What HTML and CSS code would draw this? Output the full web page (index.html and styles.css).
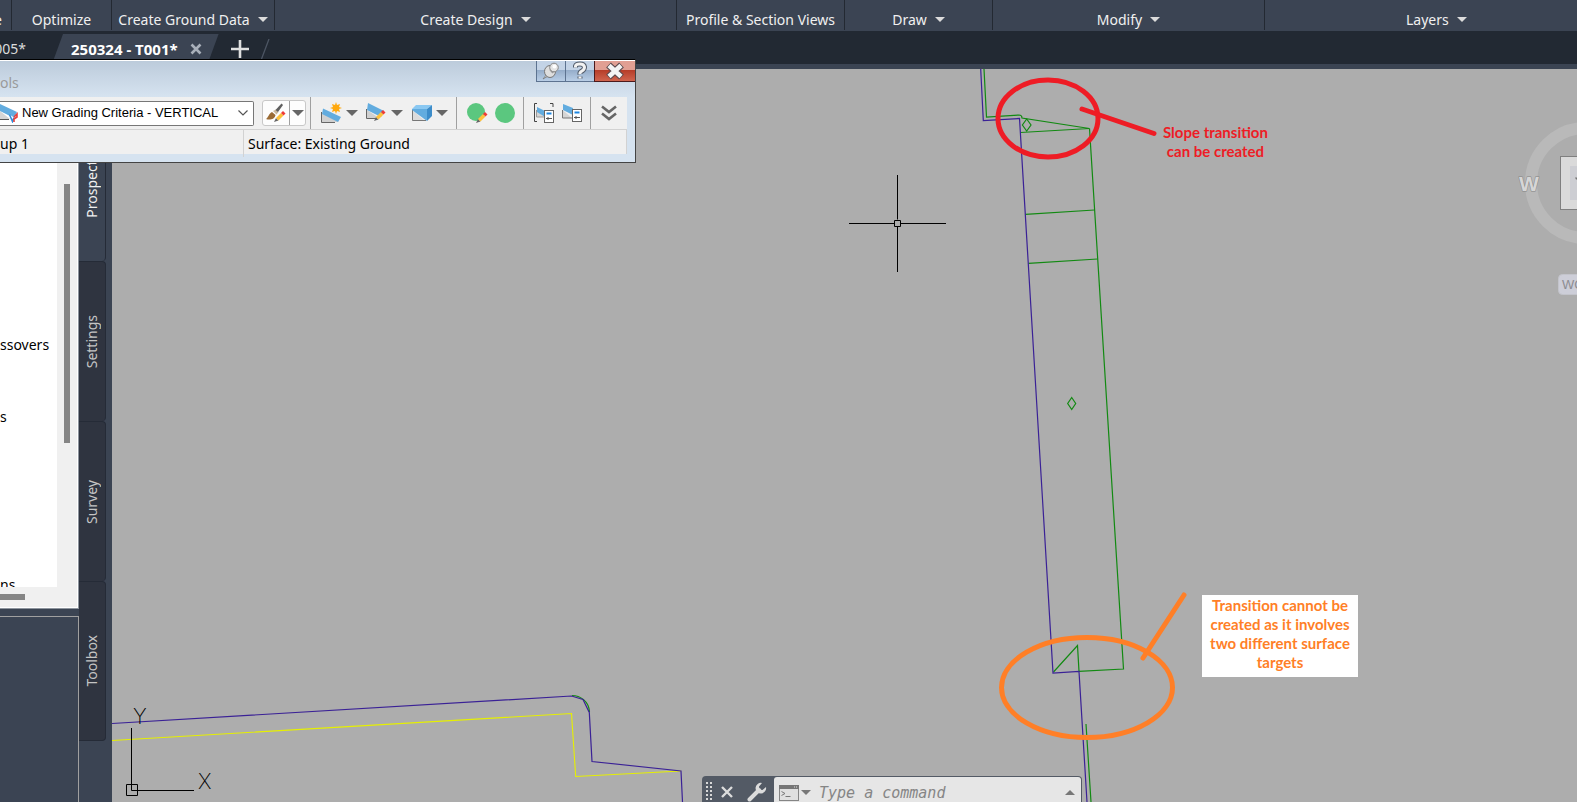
FILE: index.html
```html
<!DOCTYPE html>
<html lang="en">
<head>
<meta charset="utf-8">
<title>250324 - T001</title>
<link rel="stylesheet" href="styles.css">
</head>
<body>
<svg class="defs" aria-hidden="true">
  <defs>
    <symbol id="down" viewBox="0 0 12 6"><path d="M0 0h12L6 6z" fill="currentColor"/></symbol>
    <symbol id="pencil" viewBox="0 0 12 12"><path d="M0 12l2-4 2.500 2.500z" fill="#666"/><path d="M2 8l5-5 2.500 2.500-5 5z" fill="#fdc13c"/><path d="M7 3l2-2 2.500 2.500-2 2z" fill="#ee3b36"/></symbol>
  </defs>
</svg>

<nav class="ribbon" aria-label="Ribbon panels">
  <span class="panel panel-start">e</span>
  <button class="panel">Optimize</button>
  <button class="panel">Create Ground Data <svg class="caret"><use href="#down"/></svg></button>
  <button class="panel">Create Design <svg class="caret"><use href="#down"/></svg></button>
  <button class="panel">Profile &amp; Section Views</button>
  <button class="panel">Draw <svg class="caret"><use href="#down"/></svg></button>
  <button class="panel">Modify <svg class="caret"><use href="#down"/></svg></button>
  <button class="panel panel-end">Layers <svg class="caret"><use href="#down"/></svg></button>
</nav>

<div class="files">
  <button class="file">005*</button>
  <div class="file-active">
    <button class="file-name">250324 - T001*</button>
    <button class="file-close" aria-label="Close drawing"><svg width="12" height="12" viewBox="0 0 12 12"><path d="M1.500 1.500l9 9M10.500 1.500l-9 9" stroke="#a9b0ba" stroke-width="2.600"/></svg></button>
  </div>
  <button class="file-new" aria-label="New drawing"><svg width="18" height="18" viewBox="0 0 18 18"><path d="M9 0v18M0 9h18" stroke="#e0e0e0" stroke-width="2.600"/></svg></button>
  <svg class="file-slash" width="9" height="20" viewBox="0 0 9 20"><path d="M.5 20L8 0" stroke="#4d5664" stroke-width="1.300"/></svg>
</div>

<main class="workspace">
  <aside class="toolspace">
    <div class="panes">
      <div class="tree-pane">
        <ul class="tree">
          <li class="row-a">ssovers</li>
          <li class="row-b">s</li>
          <li class="row-c">ns</li>
        </ul>
        <div class="vscroll"><div class="vthumb"></div></div>
        <div class="hscroll"><div class="hthumb"></div></div>
      </div>
      <div class="detail-pane"></div>
    </div>
    <div class="side-tabs">
      <button class="side-tab current"><span>Prospector</span></button>
      <button class="side-tab"><span>Settings</span></button>
      <button class="side-tab"><span>Survey</span></button>
      <button class="side-tab"><span>Toolbox</span></button>
    </div>
  </aside>

  <section class="canvas">
    <svg class="drawing" aria-label="Grading plan">
      <g transform="translate(-112 -69)" fill="none">
        <g stroke="#e6f000" stroke-width="1.100">
          <path d="M112 740.500L571.500 713.500L575.700 776.500L681 771"/>
        </g>
        <g stroke="#128a12" stroke-width="1.200">
          <path d="M572 695.500C580 695.500 589 701 589.500 712"/>
          <path d="M984 69L986.500 117L1019 115Q1022 115 1022 118L1089.500 128.500L1020.500 132.500"/>
          <path d="M1089.500 128.500L1123.500 669L1079 671.300L1077.500 645.500L1053.500 672"/>
          <path d="M1025.500 214.300L1094.500 210M1028.500 263.300L1097.500 259M1086 724L1091 802"/>
          <path d="M1026.700 119l4.300 6-4.300 6-4.300-6zM1071.700 397.500l4 6-4 6-4-6z"/>
        </g>
        <g stroke="#3a2196" stroke-width="1.200">
          <path d="M112 723.500L571.500 696L583 699.500L589.300 712.500L592 761.500L681 771L682.500 802"/>
          <path d="M980.700 69L983.300 120.500L1019.500 118.500L1053 673L1079 671.500L1087 802"/>
        </g>
        <g stroke="#000">
          <path d="M897.500 175v44.500M897.500 227v45M849 223.500h45M901 223.500h45M894.500 220.500h6v6h-6z"/>
          <path d="M131.500 728v62.500H194M126.500 784.500h11v11h-11z"/>
        </g>
        <g class="ucs"><text x="133" y="724">Y</text><text x="198" y="789">X</text></g>
        <g stroke="#ee1c25" stroke-width="5" stroke-linecap="round">
          <ellipse cx="1048" cy="118.500" rx="50" ry="38.500"/><path d="M1082 109L1154 133.500"/>
        </g>
        <g stroke="#ff7f27" stroke-width="5" stroke-linecap="round">
          <ellipse cx="1087" cy="687.500" rx="85.500" ry="50"/><path d="M1184 595L1143 658"/>
        </g>
      </g>
    </svg>

    <p class="note note-red">Slope transition<br>can be created</p>
    <p class="note note-orange">Transition cannot be<br>created as it involves<br>two different surface<br>targets</p>

    <svg class="viewcube" width="64" height="190" viewBox="0 0 64 190" aria-label="View cube">
      <circle cx="73" cy="73" r="55" fill="none" stroke="#b9b9b9" stroke-width="12"/>
      <rect x="47.500" y="46.500" width="54" height="53" fill="#dadada" stroke="#7f7f7f"/>
      <rect x="57" y="56" width="34" height="34" fill="#cdced3"/>
      <path d="M62 67.500h2v2h-1z" fill="#777"/>
      <text class="compass" x="6" y="81">W</text>
      <rect x="45.500" y="164.500" width="40" height="20" rx="4" fill="#cdced8" stroke="#c3c4cb"/>
      <text class="wcs" x="49" y="179">WC</text>
    </svg>

    <div class="command">
      <div class="grip"></div>
      <button class="cmd-btn" aria-label="Close"><svg width="12" height="12" viewBox="0 0 12 12"><path d="M1 1l10 10M11 1L1 11" stroke="#dcdcdc" stroke-width="2.400"/></svg></button>
      <button class="cmd-btn cmd-wrench" aria-label="Customize"><svg width="20" height="20" viewBox="0 0 20 20"><path d="M2.500 17.500L12 8" stroke="#dcdcdc" stroke-width="4" stroke-linecap="round"/><path d="M15 1a5.300 5.300 0 1 0 4 4l-3.500 3-3-.5-.5-3z" fill="#dcdcdc"/></svg></button>
      <div class="cmd-line">
        <svg width="20" height="16" viewBox="0 0 20 16"><rect x=".5" y=".5" width="19" height="15" fill="#e0e0e0" stroke="#858585"/><path d="M0 0h20v4H0z" fill="#777"/><path d="M15 2h1M17 2h1" stroke="#ddd"/><path d="M2.500 6.500l3.500 2-3.500 2M6.500 11.500h5" fill="none" stroke="#777"/></svg>
        <svg class="cmd-caret"><use href="#down"/></svg>
        <input class="cmd-input" aria-label="Command" placeholder="Type a command">
        <svg class="cmd-up"><use href="#down"/></svg>
      </div>
    </div>
  </section>
</main>

<section class="palette" aria-label="Grading tools">
  <header class="caption">
    <h1 class="caption-text">ols</h1>
    <div class="caption-buttons">
      <button class="cap" aria-label="Pin"><svg width="18" height="18" viewBox="0 0 18 18"><path d="M1 17l4-5 2 1.500z" fill="#ddd" stroke="#777" stroke-width=".8"/><ellipse cx="8" cy="9.500" rx="5.500" ry="6" fill="#dedede" stroke="#777"/><path d="M8.500 7l3 3.500" stroke="#999" stroke-width="3"/><circle cx="12" cy="5.500" r="4.300" fill="#e4e4e4" stroke="#888"/><circle cx="12.500" cy="4.500" r="2" fill="#fff"/></svg></button>
      <button class="cap" aria-label="Help"><svg width="14" height="20" viewBox="0 0 14 20"><g fill="none" stroke-linejoin="round"><path d="M2.500 6.500V5Q3 3 7 3t4.500 3Q11.500 8.500 9 10T7 13.200M7 15.400v2.200" stroke="#505a68" stroke-width="5"/><path d="M2.500 6.500V5Q3 3 7 3t4.500 3Q11.500 8.500 9 10T7 13.200M7 15.400v2.200" stroke="#f2f2f2" stroke-width="3"/></g></svg></button>
      <button class="cap cap-close" aria-label="Close"><svg width="20" height="18" viewBox="0 0 20 18"><path d="M3.500 3l13 12M16.500 3l-13 12" stroke="#5b4a4e" stroke-width="7"/><path d="M4 3.500l12 11M16 3.500l-12 11" stroke="#f4f4f4" stroke-width="4.600"/></svg></button>
    </div>
  </header>

  <div class="tools">
    <div class="combo">
      <svg width="18" height="20" viewBox="0 0 18 20"><path d="M0 8v8h10z" fill="#d5d5d5"/><path d="M0 16.500h9" stroke="#555"/><path d="M0 1l17 8-3 6L0 8z" fill="#62acdf"/><path d="M9.500 11.500l3 7 1.500-4" fill="#fff" stroke="#2f8ddd" stroke-width="1.600"/><path d="M14 14l3-3v3l-3 2v3" fill="none" stroke="#e8413c" stroke-width="1.600"/></svg>
      <select class="criteria" aria-label="Grading criteria"><option>New Grading Criteria - VERTICAL</option></select>
      <svg class="combo-chevron" width="10" height="6" viewBox="0 0 10 6"><path d="M.5 .5l4.500 4.500L9.500 .5" fill="none" stroke="#555" stroke-width="1.200"/></svg>
    </div>
    <div class="split">
      <button class="split-main" aria-label="Edit criteria"><svg width="20" height="20" viewBox="0 0 20 20"><path d="M0 16c2-1 2.500-5 6-7l3.500 3C9 16 4 17.500 0 16z" fill="#9b6b34"/><path d="M7 8l3.500 3.500 2-2.500L10 6.500z" fill="#c9b79c"/><path d="M9.500 7l6-6.500 1.500 1.500-5 7z" fill="#5f5f5f"/><svg x="8" y="7" width="12" height="12"><use href="#pencil"/></svg></svg></button>
      <button class="split-more" aria-label="More"><svg class="arrow"><use href="#down"/></svg></button>
    </div>
    <div class="group">
      <button class="tool" aria-label="Create grading"><svg width="22" height="22" viewBox="0 0 22 22"><path d="M1 11v9h17z" fill="#d0d0d0"/><path d="M.5 10v10.500H14" fill="none" stroke="#666"/><path d="M2 6.500l18 8.500-3 5L1 12z" fill="#62acdf"/><path d="M15 0l1 3 3-1-1 3 3 1-3 1 1 3-3-1-1 3-1-3-3 1 1-3-3-1 3-1-1-3 3 1z" fill="#ffa90f"/></svg><svg class="arrow"><use href="#down"/></svg></button>
      <button class="tool" aria-label="Edit grading"><svg width="22" height="22" viewBox="0 0 22 22"><path d="M1 8v8h12z" fill="#d0d0d0"/><path d="M.5 7v9.500H10" fill="none" stroke="#666"/><path d="M2 1l16 8-3 6L1 8z" fill="#62acdf"/><svg x="8" y="7" width="12" height="12"><use href="#pencil"/></svg></svg><svg class="arrow"><use href="#down"/></svg></button>
      <button class="tool" aria-label="Grading volume"><svg width="22" height="22" viewBox="0 0 22 22"><path d="M1 8v11h13z" fill="#dcdcdc"/><path d="M1.500 8v10.500H15" fill="none" stroke="#777"/><path d="M1 7l4-4h16l-5 4z" fill="#8ac8f2"/><path d="M1 7h15v12L1 8z" fill="#62acdf"/><path d="M16 7l5-4v11l-5 5z" fill="#3c8cc9"/></svg><svg class="arrow"><use href="#down"/></svg></button>
    </div>
    <div class="group">
      <button class="tool" aria-label="Edit group"><svg width="22" height="22" viewBox="0 0 22 22"><circle cx="9" cy="10" r="9" fill="#5bc77f"/><svg x="9" y="9" width="12" height="12"><use href="#pencil"/></svg></svg></button>
      <button class="tool" aria-label="Group status"><svg width="22" height="22" viewBox="0 0 22 22"><circle cx="10" cy="11" r="10" fill="#5bc77f"/></svg></button>
    </div>
    <div class="group">
      <button class="tool" aria-label="Group properties"><svg width="22" height="22" viewBox="0 0 22 22"><path d="M3 1.500H.5v18H3M16 1.500h3V5" fill="none" stroke="#444"/><path d="M2.500 8v7H10" fill="#d5d5d5" stroke="#999"/><path d="M3 5l8 4v6L3 10z" fill="#62acdf"/><rect x="10.500" y="8.500" width="9" height="12" fill="#fff" stroke="#666"/><path d="M12.500 10.500h5v2h-5z" fill="#1d86e0"/><path d="M12 16.500h6M14 15v3" stroke="#555"/></svg></button>
      <button class="tool" aria-label="Feature properties"><svg width="22" height="22" viewBox="0 0 22 22"><path d="M.5 8v8H10" fill="#d5d5d5" stroke="#777"/><path d="M1 2l10 4v7L1 8z" fill="#62acdf"/><rect x="10.500" y="7.500" width="9" height="12" fill="#fff" stroke="#666"/><path d="M12.500 9.500h5v2h-5z" fill="#1d86e0"/><path d="M12 15.500h6M14 14v3" stroke="#555"/></svg></button>
    </div>
    <div class="group">
      <button class="tool" aria-label="Expand"><svg width="16" height="16" viewBox="0 0 16 16"><path d="M1 1.500l7 5.500 7-5.500M1 8.500l7 5.500 7-5.500" fill="none" stroke="#666" stroke-width="2.600"/></svg></button>
    </div>
  </div>

  <div class="status">
    <span class="status-group">up 1</span>
    <span class="status-surface">Surface: Existing Ground</span>
  </div>
</section>
</body>
</html>
```
FILE: styles.css
```css
* { box-sizing: border-box; }

body {
  margin: 0;
  height: 100vh;
  overflow: hidden;
  display: flex;
  flex-direction: column;
  background: #3b4453;
  font: 14px/20px "Noto Sans", "Open Sans", sans-serif;
}

button {
  margin: 0;
  padding: 0;
  border: 0;
  background: none;
  color: inherit;
  font: inherit;
}

svg { display: block; flex: none; }
.defs { position: absolute; width: 0; height: 0; }

/* Ribbon */
.ribbon {
  flex: none;
  display: grid;
  grid-template-columns: 12px 100px 163px 402px 168px 148px 272px 1fr;
  height: 31px;
  padding-bottom: 1px;
  color: #f0f0f0;
}
.panel {
  display: flex;
  align-items: center;
  justify-content: center;
  gap: 8px;
  padding-top: 9px;
  border-right: 1px solid #232932;
  white-space: nowrap;
}
.panel-start { justify-content: flex-end; padding-right: 9px; }
.panel-end { justify-content: flex-start; padding-left: 141px; border: 0; }
.caret { width: 10px; height: 5px; color: #dcdcdc; }

/* Drawing file tabs */
.files {
  flex: none;
  display: flex;
  align-items: flex-start;
  height: 33px;
  padding-top: 3px;
  background: #222933;
  color: #dcdcdc;
}
.file { width: 52px; height: 30px; padding-right: 26px; display: flex; justify-content: flex-end; align-items: center; }
.file-active {
  display: flex;
  align-items: center;
  gap: 12px;
  height: 30px;
  padding: 0 17px 0 19px;
  background: #3b4453;
  clip-path: polygon(11px 0, 100% 0, calc(100% - 11px) 100%, 0 100%);
  color: #fff;
  font-size: 15px;
  font-weight: 700;
}
.file-new { margin: 6px 0 0 12px; }
.file-slash { margin: 5px 0 0 12px; }

/* Workspace */
.workspace { flex: 1; min-height: 0; display: flex; margin-top: 5px; }
.toolspace { flex: none; width: 112px; display: flex; background: #3b4453; }
.panes { width: 79px; display: flex; flex-direction: column; }
.tree-pane {
  flex: 1;
  min-height: 0;
  display: grid;
  grid-template-columns: 57px 1fr;
  grid-template-rows: 1fr 21px;
  background: #f0f0f0;
  border-right: 1px solid #8e959e;
  border-bottom: 1px solid #8e959e;
  box-shadow: inset -1px -1px #fff;
}
.tree {
  margin: 0;
  padding: 0;
  min-height: 0;
  overflow: hidden;
  list-style: none;
  background: #fff;
  color: #000;
  display: grid;
  grid-template-rows: 264px 72px 168px 24px;
}
.tree li { line-height: 24px; align-self: start; }
.tree .row-a { grid-row: 2; }
.tree .row-b { grid-row: 3; }
.tree .row-c { grid-row: 4; }
.vscroll { padding: 115px 7px 0; }
.vthumb { width: 6px; height: 259px; background: #858585; }
.hscroll { padding-top: 7px; }
.hthumb { width: 25px; height: 6px; background: #858585; }
.detail-pane {
  flex: none;
  height: 186px;
  margin-top: 7px;
  border-top: 1px solid #a0a0a0;
  border-right: 1px solid #a0a0a0;
}
.side-tabs { width: 27px; padding-top: 32px; }
.side-tab {
  display: flex;
  align-items: center;
  justify-content: center;
  width: 27px;
  height: 160px;
  border: 1px solid #252b37;
  border-bottom-width: 0;
  border-left: 0;
  border-radius: 0 4px 4px 0;
  background: #2f3440;
  color: #c4c4c4;
}
.side-tab:last-child { border-bottom-width: 1px; }
.side-tab span { writing-mode: vertical-rl; transform: rotate(180deg); }
.side-tab.current { background: #3b4453; color: #f0f0f0; }

/* Model space */
.canvas { flex: 1; min-width: 0; position: relative; overflow: hidden; background: #adadad; }
.drawing { width: 100%; height: 100%; }
.ucs { fill: #000; font: 200 21px Inter, sans-serif; }
.note {
  position: absolute;
  margin: 0;
  font: 700 15px/19px Lato, "Open Sans", sans-serif;
  text-align: center;
  white-space: nowrap;
}
.note-red { left: 1051px; top: 54px; color: #ee1c25; }
.note-orange { left: 1090px; top: 526px; width: 156px; padding: 1px 0 5px; background: #fff; color: #ff7f27; }
.viewcube { position: absolute; right: 0; top: 41px; }
.compass { fill: #d6d6d6; stroke: #858585; stroke-width: 1px; paint-order: stroke; font: 700 21px "Liberation Sans", sans-serif; }
.wcs { fill: #8c8c92; font: 13px "Liberation Sans", sans-serif; }

/* Command line */
.command {
  position: absolute;
  left: 590px;
  bottom: 0;
  display: flex;
  width: 380px;
  height: 26px;
  padding: 1px 1px 0 4px;
  border-radius: 4px 4px 0 0;
  background: #535a65;
}
.grip {
  width: 8px;
  margin-top: 5px;
  background: radial-gradient(circle at 1px 1px, #d8d8d8 1px, transparent 1px) 0 0 / 4px 4px;
}
.cmd-btn { width: 26px; display: flex; align-items: center; justify-content: center; padding-top: 4px; }
.cmd-wrench { width: 34px; }
.cmd-line { flex: 1; display: flex; align-items: center; padding: 6px 6px 0 5px; border-radius: 3px 3px 0 0; background: #e6e6e6; color: #777; }
.cmd-caret { width: 10px; height: 5px; margin-left: 2px; }
.cmd-up { width: 10px; height: 5px; transform: rotate(180deg); }
.cmd-input {
  flex: 1;
  min-width: 0;
  height: 18px;
  margin: 0;
  padding: 0 0 0 8px;
  border: 0;
  background: none;
  font: italic 15px/18px "DejaVu Sans Mono", monospace;
}
.cmd-input::placeholder { color: #858585; opacity: 1; }

/* Floating grading palette */
.palette {
  position: absolute;
  left: 0;
  top: 59px;
  width: 636px;
  padding: 0 8px 8px 0;
  border: 1px solid #444;
  border-top: 1px solid #000;
  border-left: 0;
  background: #d6e3f0;
  box-shadow: inset 0 1px #fff;
}
.caption {
  display: flex;
  justify-content: space-between;
  height: 36px;
  margin: 1px -8px 0 0;
  background: linear-gradient(#bccbdb, #d6e3f0);
}
.caption-text { margin: 12px 0 0; font: inherit; color: #9a9a9a; }
.caption-buttons { display: flex; height: 21px; }
.cap {
  width: 29px;
  display: flex;
  align-items: center;
  justify-content: center;
  border: 1px solid #5d7390;
  border-width: 0 0 1px 1px;
  background: linear-gradient(#c3d3e6 45%, #94acc9 45%, #b9cee6);
}
.cap-close { width: 41px; border-color: #4c1a1c; background: linear-gradient(#e19f93 45%, #b53c28 45%, #d0644e); }

.tools { display: flex; align-items: center; height: 33px; background: #f0f0f0; border-bottom: 1px solid #d2d2d2; }
.combo { position: relative; display: flex; align-items: center; width: 254px; height: 25px; border: 1px solid #777; border-left: 0; border-radius: 0 2px 2px 0; background: #fff; }
.criteria {
  flex: 1;
  min-width: 0;
  height: 23px;
  padding: 0 0 0 4px;
  border: 0;
  appearance: none;
  background: none;
  color: #000;
  font: 13px/20px "Liberation Sans", Arial, sans-serif;
}
.combo-chevron { position: absolute; right: 5px; pointer-events: none; }
.split { display: flex; width: 44px; height: 26px; margin: 0 4px 0 8px; border: 1px solid #c8c8c8; border-radius: 3px; background: #fdfdfd; }
.split-main, .split-more { flex: 1; display: flex; align-items: center; justify-content: center; }
.split-main { flex: 0 0 27px; border-right: 1px solid #a0a0a0; }
.arrow { width: 12px; height: 6px; color: #666; }
.group { display: flex; align-items: center; gap: 8px; height: 32px; padding: 0 8px 0 10px; border-left: 1px solid #a0a0a0; }
.group + .group { gap: 6px; padding-right: 6px; }
.tool { display: flex; align-items: center; gap: 3px; }

.status { display: grid; grid-template-columns: 244px 1fr; height: 24px; background: #f0f0f0; color: #000; border-right: 1px solid #d2d2d2; line-height: 27px; }
.status-group { border-right: 1px solid #d2d2d2; }
.status-surface { padding-left: 4px; }
```
